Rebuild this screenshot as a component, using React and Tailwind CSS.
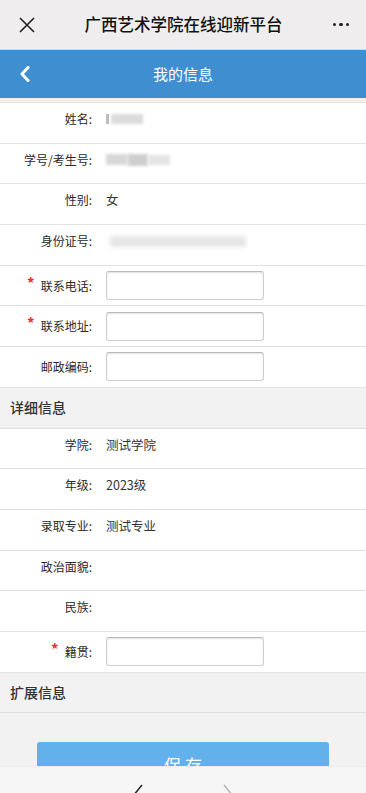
import React from "react";

const font = { fontFamily: '"Noto Sans CJK SC", "Noto Sans", sans-serif' };

function Row({ label, children, required, input }) {
  return (
    <div
      className={`flex h-[40.7px] border-b border-[#e2e2e2] bg-white ${
        input ? "items-center" : "items-start"
      }`}
    >
      <div
        className={`w-[92px] shrink-0 text-right text-[12px] leading-[18px] text-[#2a2a2a] ${
          input ? "" : "pt-[7px]"
        }`}
      >
        {required && (
          <span className="mr-[6px] inline-block -translate-y-[2px] text-[15px] font-bold leading-none text-[#e8322c]">
            *
          </span>
        )}
        {label}:
      </div>
      <div
        className={`ml-[14px] text-[12.5px] leading-[18px] text-[#333] ${
          input ? "" : "pt-[7px]"
        }`}
      >
        {children}
      </div>
    </div>
  );
}

function Input() {
  return (
    <div className="h-[29px] w-[158px] rounded-[3px] border border-[#cfcfcf] border-t-[#b9b9b9] bg-white shadow-[inset_0_1px_2px_rgba(0,0,0,0.12)]" />
  );
}

function Section({ title }) {
  return (
    <div className="flex h-[40.7px] items-center border-b border-[#dedede] bg-[#f2f2f2] pl-[10px] text-[14px] font-medium text-[#333]">
      {title}
    </div>
  );
}

export default function App() {
  return (
    <div
      className="relative h-[793px] w-[366px] overflow-hidden bg-[#f2f2f2]"
      style={font}
    >
      {/* top bar */}
      <div className="flex h-[50px] items-center justify-between border-b border-[#d9d9d9] bg-[#efeded] px-[17px]">
        <svg width="18" height="18" viewBox="0 0 18 18" className="ml-[1px]">
          <path d="M2 2 L16 16 M16 2 L2 16" stroke="#222" strokeWidth="1.6" fill="none" />
        </svg>
        <div className="text-[16.5px] font-medium text-[#111]">
          广西艺术学院在线迎新平台
        </div>
        <div className="flex w-[18px] justify-end gap-[3px]">
          <span className="block h-[3.5px] w-[3.5px] rounded-full bg-[#222]" />
          <span className="block h-[3.5px] w-[3.5px] rounded-full bg-[#222]" />
          <span className="block h-[3.5px] w-[3.5px] rounded-full bg-[#222]" />
        </div>
      </div>

      {/* blue header */}
      <div className="relative flex h-[48px] items-center justify-center bg-[#3f8ecf]">
        <svg
          width="12"
          height="16"
          viewBox="0 0 12 16"
          className="absolute left-[19px] top-[16px]"
        >
          <path
            d="M9 1.5 L3 8 L9 14.5"
            stroke="#fff"
            strokeWidth="3"
            fill="none"
            strokeLinecap="round"
            strokeLinejoin="round"
          />
        </svg>
        <div className="text-[15px] text-white">我的信息</div>
      </div>

      <div className="h-[5px] border-b border-[#e4e4e4] bg-[#f0f0f0]" />

      <Row label="姓名">
        <div className="mt-[4px] flex items-center">
          <div className="h-[10px] w-[3px] bg-[#bdbdbd] blur-[0.5px]" />
          <div className="ml-[2px] h-[10px] w-[32px] bg-[#dcdcdc] blur-[1.5px]" />
        </div>
      </Row>
      <Row label="学号/考生号">
        <div className="mt-[3px] flex items-center">
          <div className="h-[11px] w-[22px] bg-[#d8d8d8] blur-[1.5px]" />
          <div className="h-[12px] w-[20px] bg-[#cfcfcf] blur-[1.5px]" />
          <div className="h-[10px] w-[22px] bg-[#e4e4e4] blur-[1.5px]" />
        </div>
      </Row>
      <Row label="性别">女</Row>
      <Row label="身份证号">
        <div className="mt-[4px] flex items-center">
          <div className="ml-[4px] h-[11px] w-[136px] bg-[#e6e6e6] blur-[2px]" />
        </div>
      </Row>
      <Row label="联系电话" required input>
        <Input />
      </Row>
      <Row label="联系地址" required input>
        <Input />
      </Row>
      <Row label="邮政编码" input>
        <Input />
      </Row>

      <Section title="详细信息" />
      <Row label="学院">测试学院</Row>
      <Row label="年级">2023级</Row>
      <Row label="录取专业">测试专业</Row>
      <Row label="政治面貌"></Row>
      <Row label="民族"></Row>
      <Row label="籍贯" required input>
        <Input />
      </Row>

      <Section title="扩展信息" />

      <div className="flex justify-center pt-[29px]">
        <div className="flex h-[44px] w-[292px] items-center justify-center rounded-[3px] bg-[#62b1ea] text-[17px] text-white">
          保 存
        </div>
      </div>

      {/* browser bottom toolbar */}
      <div className="absolute bottom-0 left-0 h-[27px] w-[366px] border-t border-[#ececec] bg-[#f6f6f6]">
        <svg
          width="366"
          height="27"
          viewBox="0 0 366 27"
          className="absolute left-0 top-0"
        >
          <path d="M142 18 L133 29" stroke="#222" strokeWidth="1.5" fill="none" />
          <path d="M224 18 L233 29" stroke="#b5b5b5" strokeWidth="1.5" fill="none" />
        </svg>
      </div>
    </div>
  );
}
